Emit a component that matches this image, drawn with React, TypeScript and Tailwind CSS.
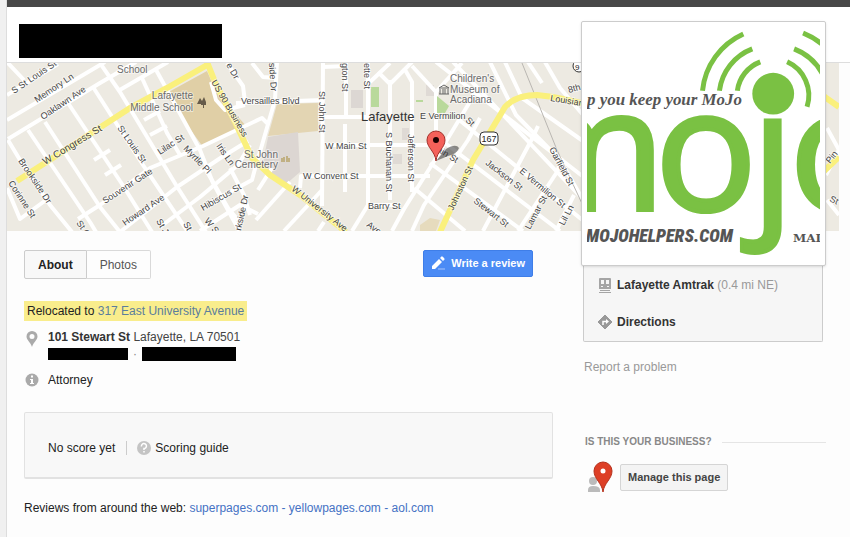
import React from "react";

const MINOR_STREETS = [
  "M7 95 L58 64",
  "M7 120 L105 62",
  "M8 139 L100 83 L136 62",
  "M118 91 L168 62",
  "M8 140 L20 160 L50 205 L72 232",
  "M7 188 L20 219 L46 200",
  "M7 62 L24 80",
  "M28 130 L90 222 L96 232",
  "M45 122 L100 207 L120 232",
  "M68 103 L122 184 L152 232",
  "M93 87 L143 165 L190 235",
  "M100 63 L120 92 L176 185 L206 232",
  "M142 78 L167 133 L180 155",
  "M155 68 L200 150 L213 183 L240 232",
  "M94 160 L110 150",
  "M105 175 L121 165",
  "M144 120 L160 111",
  "M150 135 L167 126",
  "M78 219 L100 205 L150 168 L203 146 L262 118 L268 124",
  "M120 232 L177 187 L222 157 L248 141",
  "M160 227 L200 197 L238 165 L250 145",
  "M200 231 L240 205 L258 214",
  "M206 170 L228 208 L238 220",
  "M230 168 L244 195 L250 215",
  "M227 63 L243 86 L245 102",
  "M211 82 L216 100 L225 110 L245 105",
  "M252 63 L263 77 L275 78",
  "M277 62 L275 100 L262 145 L256 165 L252 180 L206 205",
  "M236 103 L323 100",
  "M258 190 L272 168",
  "M256 220 L290 182",
  "M284 231 L322 190",
  "M318 231 L324 222",
  "M300 188 L301 176 L430 176",
  "M323 62 L322 206",
  "M323 67 L346 66",
  "M346 62 L346 117",
  "M323 117 L370 117",
  "M368 62 L368 205 L352 231",
  "M345 124 L345 192",
  "M325 145 L430 145",
  "M370 82 L390 63",
  "M378 72 L390 84 L412 62",
  "M390 80 L390 200",
  "M404 68 L412 82 L412 192",
  "M412 66 L436 92 L436 145",
  "M368 205 L400 205",
  "M392 231 L404 209 L433 163 L468 105 L476 90",
  "M412 231 L424 205 L468 140 L480 118",
  "M483 231 L533 137 L538 126",
  "M518 231 L557 172 L562 158",
  "M556 231 L574 195",
  "M430 163 L523 231",
  "M445 143 L560 231",
  "M414 188 L465 231",
  "M436 62 L590 182",
  "M453 62 L595 212",
  "M458 119 L596 231",
  "M490 62 L516 115 L560 160 L590 212",
  "M505 62 L522 98 L600 153",
  "M436 92 L462 63",
  "M545 62 L560 88 L596 130",
  "M528 62 L542 83",
  "M827 128 L839 150",
  "M826 175 L839 150",
  "M827 200 L839 215",
];

const YELLOW_STREETS = [
  "M17 181 L90 134 L130 108 L167 88 L209 64",
  "M207 62 L215 82 L235 122 L252 158 L270 175 L300 195 L346 232",
  "M440 232 L473 160 L493 127 L505 107 Q516 95 537 95 Q560 97 600 108",
  "M822 95 L839 107",
  "M822 173 L839 157",
];

type MapLabel = [text: string, x: number, y: number, angle: number, size?: number];

const LABELS: MapLabel[] = [
  ["S St Louis St", 14, 94, -34],
  ["Memory Ln", 37, 103, -34],
  ["Oaklawn Ave", 43, 120, -34],
  ["W Congress St", 45, 165, -31, 10],
  ["Brookside Dr", 18, 161, 56],
  ["Corinne St", 8, 183, 57],
  ["St Louis St", 117, 128, 55],
  ["Souvenir Gate", 105, 204, -33],
  ["Howard Ave", 125, 226, -34],
  ["Lilac St", 160, 155, -33],
  ["Myrtle Pl", 183, 149, 46],
  ["Iris Ln", 216, 146, 55],
  ["Hibiscus St", 203, 211, -30],
  ["St C", 76, 223, 55],
  ["St J", 156, 221, 60],
  ["St", 183, 224, 60],
  ["W S", 204, 221, 50],
  ["e Dr", 226, 65, 60],
  ["side Dr", 269, 63, 86],
  ["rkside Dr", 241, 231, -78],
  ["US 90 Business", 211, 82, 60, 9],
  ["Versailles Blvd", 241, 104, 0, 9],
  ["St John St", 319, 91, 90],
  ["gton St", 342, 63, 90],
  ["ette St", 364, 63, 90],
  ["W Main St", 325, 149, 0, 9],
  ["W Convent St", 303, 179, 0, 9],
  ["Barry St", 368, 209, 0, 9],
  ["S Buchanan St", 386, 132, 90],
  ["Jefferson St", 408, 134, 90],
  ["Ave", 366, 226, 35],
  ["W University Ave", 291, 190, 38, 9],
  ["E Vermilion", 420, 119, 0, 9],
  ["St", 465, 121, 42],
  ["Main St", 430, 147, 32],
  ["Johnston St", 453, 211, -65, 9],
  ["Jackson St", 485, 164, 38],
  ["Stewart St", 473, 202, 38],
  ["E Vermilion St", 519, 172, 40],
  ["Lamar St", 530, 230, -62],
  ["Garfield St", 549, 149, 62],
  ["Lil Ln", 564, 226, -62],
  ["Louisian", 550, 101, 9, 9],
  ["8th", 569, 93, -16],
  ["Pin", 830, 164, -52],
  ["St", 829, 201, 25],
];

function StreetMap() {
  return (
    <svg
      className="block h-42 w-full bg-[#edeae2]"
      viewBox="7 63 832 168"
      preserveAspectRatio="xMinYMid slice"
      role="img"
      aria-label="Map of Lafayette"
      fontFamily="'Liberation Sans', Arial, sans-serif"
    >
      <path d="M165 94 L207 71 L216 92 L247 127 L203 147 Z" fill="#e0cfa6" />
      <path d="M277 104 L318 103 L318 131 L268 136 Z" fill="#e3d5b3" />
      <path d="M268 137 L298 132 L300 172 L285 185 L262 168 Z" fill="#dcd6d2" />
      <rect x="351" y="90" width="12" height="18" fill="#dcd7d3" />
      <rect x="393" y="154" width="9" height="10" fill="#dfdad5" />
      <rect x="402" y="128" width="7" height="12" fill="#dfdad5" />
      <rect x="426" y="85" width="8" height="11" fill="#dfdad5" />
      <path d="M420 225 L430 218 L440 220 L436 231 H420 Z" fill="#e6dbbd" />
      <g fill="none" stroke="#fff" strokeWidth="4" strokeLinejoin="round">
        {MINOR_STREETS.map((d) => (
          <path key={d} d={d} />
        ))}
      </g>
      <rect x="371" y="87" width="8" height="20" fill="#b9d99b" />
      <path d="M437 96 L449 106 L445 113 H437 Z" fill="#b9d99b" />
      <path d="M416 101 H423" stroke="#b9d99b" strokeWidth="2" />
      <path d="M522 63 L557 150 L585 210" fill="none" stroke="#b9b6b1" strokeWidth="1" />
      <g fill="none" stroke="#faf07c" strokeWidth="6" strokeLinejoin="round">
        {YELLOW_STREETS.map((d) => (
          <path key={d} d={d} />
        ))}
      </g>
      <g fill="#454545" stroke="#fff" strokeWidth="2" strokeOpacity="0.5" paintOrder="stroke">
        {LABELS.map(([text, x, y, angle, size = 9]) => (
          <text key={`${text}${x}`} x={x} y={y} fontSize={size} transform={`rotate(${angle} ${x} ${y})`}>
            {text}
          </text>
        ))}
      </g>
      <g fill="#6b6b6b" fontSize="10" stroke="#fff" strokeWidth="2" strokeOpacity="0.5" paintOrder="stroke">
        <text x="117" y="73">School</text>
        <text x="193" y="99" textAnchor="end">Lafayette</text>
        <text x="193" y="111" textAnchor="end">Middle School</text>
        <text x="278" y="158" textAnchor="end">St John</text>
        <text x="278" y="168" textAnchor="end">Cemetery</text>
        <text x="450" y="82">Children's</text>
        <text x="450" y="93">Museum of</text>
        <text x="450" y="103">Acadiana</text>
      </g>
      <text x="361" y="121" fontSize="13" fill="#333">Lafayette</text>
      <path d="M197 104 l3 -6 2 3 2 -4 2 5 v3 h-2 v3 h-1 v-3 h-2 v-1 z" fill="#665b49" />
      <path d="M282 162 v-4 M284 162 v-5 M289 162 v-4 M287 162 v-6" stroke="#a58a35" strokeWidth="1" />
      <path d="M439 88 l5 -3 5 3 z M440 89 v5 M443 89 v5 M445 89 v5 M448 89 v5 M439 94 h10" fill="none" stroke="#666" strokeWidth="1" />
      <rect x="480" y="132" width="18" height="13" rx="4" fill="#fff" stroke="#333" />
      <text x="489" y="142" fontSize="9" textAnchor="middle" fill="#222">167</text>
      <circle cx="579" cy="66" r="6" fill="#fff" stroke="#333" />
      <text x="575" y="70" fontSize="8" fill="#222">9</text>
      <path d="M436 161 L446 149 Q456 143 459 148 Q457 154 448 156 Z" fill="#333" fillOpacity="0.55" />
      <path
        d="M436 161 C435 151 427 148 427 140 A9 9 0 0 1 445 140 C445 148 437 151 436 161 Z"
        fill="#f4615a"
        stroke="#a3312b"
      />
      <circle cx="436" cy="140" r="3" fill="#1a0000" />
    </svg>
  );
}

function MojoLogo() {
  return (
    <svg
      className="block aspect-square w-full"
      viewBox="586 26 234 234"
      role="img"
      aria-label="MoJo Helpers logo"
    >
      <g
        fill="#7ac143"
        stroke="#7ac143"
        strokeWidth="4"
        fontFamily="'Open Sans', sans-serif"
        fontSize="171"
      >
        <text x="665" y="210" textAnchor="end">m</text>
        <text x="654" y="210">o</text>
        <text x="751" y="212">ȷ</text>
        <text x="789" y="210">o</text>
      </g>
      <circle cx="773" cy="93" r="21" fill="#7ac143" />
      <g fill="none" stroke="#7ac143" strokeWidth="5">
        <path d="M702 90 A70 70 0 0 1 743 33" />
        <path d="M719 90 A52 52 0 0 1 752 48" />
        <path d="M737 90 A36 36 0 0 1 760 61" />
        <path d="M787 61 A37 37 0 0 1 807 106" />
        <path d="M794 48 A55 55 0 0 1 824 76" />
        <path d="M803 32 A70 70 0 0 1 828 49" />
      </g>
      <g fill="#555">
        <text x="586" y="104" fontFamily="'Liberation Serif', serif" fontSize="17" fontWeight="700" fontStyle="italic">
          p you keep your MoJo
        </text>
        <text
          x="585"
          y="242"
          fontFamily="'Roboto Condensed', 'Liberation Sans', sans-serif"
          fontSize="18"
          fontWeight="900"
          fontStyle="italic"
        >
          MOJOHELPERS.COM
        </text>
        <text x="793" y="242" fontFamily="'DejaVu Serif', serif" fontSize="12" fontWeight="700">
          MAI
        </text>
      </g>
    </svg>
  );
}

function PlaceIcon() {
  return (
    <svg className="mt-1 h-4 w-4 shrink-0" viewBox="0 0 16 16" aria-hidden="true">
      <path
        d="M8 0 A5.5 5.5 0 0 1 13.5 5.5 C13.5 9 9.500 11 8 16 C6.500 11 2.500 9 2.500 5.500 A5.500 5.500 0 0 1 8 0 Z M8 3 A2.500 2.500 0 1 0 8 8 A2.500 2.500 0 1 0 8 3 Z"
        fill="#aaa"
        fillRule="evenodd"
      />
    </svg>
  );
}

function InfoIcon() {
  return (
    <svg className="h-4 w-4 shrink-0" viewBox="0 0 16 16" aria-hidden="true">
      <circle cx="8" cy="8" r="6.500" fill="#aaa" />
      <path d="M7 3.500 h2 v2 h-2 z M6 7 h3 v4 h1 v1 h-4 v-1 h1 v-3 h-1 z" fill="#fff" />
    </svg>
  );
}

function HelpIcon() {
  return (
    <svg className="h-4 w-4 shrink-0" viewBox="0 0 16 16" aria-hidden="true">
      <circle cx="8" cy="8" r="7" fill="#c4c4c4" />
      <path d="M5.500 6.500 A2.500 2.500 0 1 1 8 8.500 V10 M8 11 V12.500" fill="none" stroke="#fff" strokeWidth="1.500" />
    </svg>
  );
}

function PencilIcon() {
  return (
    <svg className="h-4 w-4 shrink-0" viewBox="0 0 16 16" aria-hidden="true">
      <path d="M1 10 L8 3 L11 6 L4 13 H1 Z M9 2 L10.500 0.500 Q11 0 12 1 L13 2 Q14 3 13.500 3.500 L12 5 Z" fill="#fff" />
      <path d="M7 13 H14" stroke="#a9c4fa" strokeWidth="1" />
    </svg>
  );
}

function TrainIcon() {
  return (
    <svg className="h-4 w-4 shrink-0" viewBox="0 0 16 16" aria-hidden="true">
      <path d="M3 1 H13 Q14 1 14 2 V12 H2 V2 Q2 1 3 1 Z M4 3 V7 H7 V3 Z M9 3 V7 H12 V3 Z M4 9 V10 H6 V9 Z M10 9 V10 H12 V9 Z" fill="#a5a5a5" fillRule="evenodd" />
      <path d="M3 13.500 H13 M2 15.500 H14" stroke="#a5a5a5" fill="none" />
    </svg>
  );
}

function DirectionsIcon() {
  return (
    <svg className="h-4 w-4 shrink-0" viewBox="0 0 16 16" aria-hidden="true">
      <path d="M8 1 L15 8 L8 15 L1 8 Z" fill="#999" stroke="#999" strokeLinejoin="round" />
      <path d="M6 11 V7.500 H10" fill="none" stroke="#fff" strokeWidth="1.500" />
      <path d="M9 5 L12 7.500 L9 10 Z" fill="#fff" />
    </svg>
  );
}

function OwnerIcon() {
  return (
    <svg className="h-8 w-8 shrink-0" viewBox="585 460 32 32" aria-hidden="true">
      <circle cx="593" cy="480" r="4" fill="#bbb" />
      <path d="M588 491 V489 Q588 485 593 485 Q600 485 600 489 V491 Z" fill="#bbb" />
      <path
        d="M603 491 C602 482 594 478 594 470 A9 9 0 0 1 612 470 C612 478 604 482 603 491 Z"
        fill="#dd3f26"
        stroke="#b5301b"
      />
      <circle cx="603" cy="470" r="2.500" fill="#fff" />
    </svg>
  );
}

function Listing() {
  return (
    <main className="min-w-0 flex-1 pt-[19px]">
      <div className="flex items-start justify-between pr-5">
        <div role="tablist" className="flex h-[29px] text-[12px]">
          <button
            role="tab"
            aria-selected="true"
            className="rounded-l-xs border border-[#ccc] bg-[#f8f8f8] px-[13px] font-bold text-[#222]"
          >
            About
          </button>
          <button
            role="tab"
            aria-selected="false"
            className="rounded-r-xs border border-l-0 border-[#d9d9d9] px-[13px] text-[#555]"
          >
            Photos
          </button>
        </div>
        <button className="flex h-[27px] items-center gap-1 rounded-xs border border-[#3f7ee8] bg-[#4b8bf5] px-[7px] text-[11px] font-bold text-white">
          <PencilIcon />
          Write a review
        </button>
      </div>

      <p className="mt-[22px] w-fit bg-[#f9ed8c] px-[3px] leading-5">
        Relocated to{" "}
        <a href="#relocated" className="text-[#5b7d9c]">
          317 East University Avenue
        </a>
      </p>

      <div className="mt-[6px] flex gap-2">
        <PlaceIcon />
        <div>
          <address className="leading-5 text-[#444] not-italic">
            <b className="text-[#333]">101 Stewart St</b> Lafayette, LA 70501
          </address>
          <div className="flex items-center gap-[5px] text-[#888]">
            <span className="h-3 w-[80px] bg-black" />
            <span className="leading-[14px]">·</span>
            <span className="h-[14px] w-[94px] bg-black" />
          </div>
        </div>
      </div>
      <div className="mt-[9px] flex items-center gap-2 leading-5">
        <InfoIcon />
        Attorney
      </div>

      <section className="mt-[22px] flex h-[67px] items-center rounded-xs border border-b-2 border-[#e2e2e2] bg-[#f8f8f8] px-[23px] pt-[6px]">
        <span>No score yet</span>
        <span className="ml-[11px] mr-[9px] h-[14px] w-px bg-[#ccc]" />
        <a href="#scoring" className="flex items-center gap-[3px]">
          <HelpIcon />
          Scoring guide
        </a>
      </section>

      <p className="mt-[19px] leading-5 text-[#4572c4]">
        <span className="text-[#222]">Reviews from around the web: </span>
        <a href="#superpages">superpages.com</a> - <a href="#yellowpages">yellowpages.com</a> -{" "}
        <a href="#aol">aol.com</a>
      </p>
    </main>
  );
}

function Sidebar() {
  return (
    <aside className="relative -mt-[210px] w-[245px] shrink-0">
      <div className="relative rounded-xs border border-[#ccc] bg-white p-[5px] shadow-sm">
        <MojoLogo />
      </div>
      <div className="ml-[2px] flex w-[240px] flex-col gap-[17px] rounded-b-xs border border-t-0 border-[#ccc] bg-[#f6f6f6] py-[9px] pl-[13px] leading-5">
        <a href="#transit" className="flex items-center gap-1 text-[#999]">
          <TrainIcon />
          <span>
            <b className="text-[#333]">Lafayette Amtrak</b> (0.4 mi NE)
          </span>
        </a>
        <a href="#directions" className="flex items-center gap-1 font-bold text-[#333]">
          <DirectionsIcon />
          Directions
        </a>
      </div>
      <a href="#report" className="mt-[15px] ml-[3px] block text-[12px] leading-5 text-[#999]">
        Report a problem
      </a>
      <div className="mt-[55px] ml-1 flex items-center gap-[10px]">
        <h2 className="text-[10px] leading-5 font-bold text-[#888]">IS THIS YOUR BUSINESS?</h2>
        <span className="h-px flex-1 bg-[#e5e5e5]" />
      </div>
      <div className="mt-[9px] ml-1 flex items-center gap-[3px]">
        <OwnerIcon />
        <button className="h-[27px] rounded-xs border border-[#d5d5d5] bg-[#f4f4f4] px-[7px] text-[11px] font-bold text-[#444]">
          Manage this page
        </button>
      </div>
    </aside>
  );
}

export default function App() {
  return (
    <div className="min-h-screen border-l-[6px] border-[#f0f0f0] bg-[#fdfdfd] font-['Liberation_Sans',Arial,sans-serif] text-[12px] text-[#222]">
      <div className="min-h-screen border-l border-[#ddd]">
        <div className="h-[7px] bg-[#484848]" />
        <header className="h-14 border-b border-[#ddd] bg-white px-3 pt-[17px]">
          <div className="h-[34px] w-[203px] bg-black" />
        </header>
        <div className="mr-[11px]">
          <StreetMap />
        </div>
        <div className="flex gap-7 pr-6 pl-[17px]">
          <Listing />
          <Sidebar />
        </div>
      </div>
    </div>
  );
}
